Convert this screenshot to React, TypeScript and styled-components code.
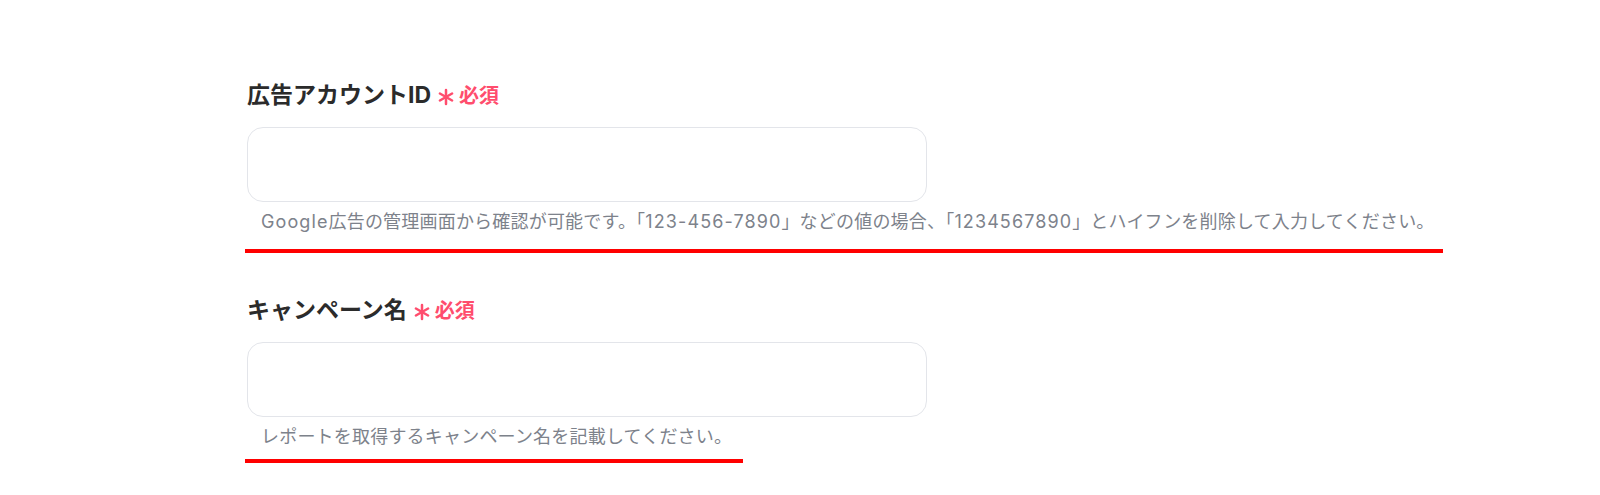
import React from 'react'
import styled, { createGlobalStyle } from 'styled-components'

const GlobalStyle = createGlobalStyle`
    html, body {
        margin: 0;
        padding: 0;
        background: #ffffff;
    }
    body {
        font-family: Inter, "Noto Sans CJK JP", sans-serif;
    }
`

type Field = {
    label: string
    help: string
    lineWidth: number
    lineGap: number
}

const fields: Field[] = [
    {
        label: '広告アカウントID',
        help: 'Google広告の管理画面から確認が可能です。「123-456-7890」などの値の場合、「1234567890」とハイフンを削除して入力してください。',
        lineWidth: 1198,
        lineGap: 15,
    },
    {
        label: 'キャンペーン名',
        help: 'レポートを取得するキャンペーン名を記載してください。',
        lineWidth: 498,
        lineGap: 10,
    },
]

// latin runs get a bit more tracking than the japanese text
const splitRuns = (text: string) => text.split(/([A-Za-z0-9-]+)/).filter(Boolean)

const Asterisk = () => (
    <svg width="18" height="18" viewBox="0 0 18 18">
        <g stroke="#ff4d6d" strokeWidth="2.5" strokeLinecap="round">
            <line x1="9" y1="2" x2="9" y2="16" />
            <line x1="2.9" y1="5.5" x2="15.1" y2="12.5" />
            <line x1="2.9" y1="12.5" x2="15.1" y2="5.5" />
        </g>
    </svg>
)

const App = () => {
    return (
        <Page>
            <GlobalStyle />
            <Form>
                {fields.map((f) => (
                    <Section key={f.label}>
                        <Label>
                            <LabelText>{f.label}</LabelText>
                            <Required>
                                <Asterisk />
                                <RequiredText>必須</RequiredText>
                            </Required>
                        </Label>
                        <Input type="text" />
                        <Help>
                            {splitRuns(f.help).map((run, i) =>
                                /^[A-Za-z0-9-]+$/.test(run) ? <Latin key={i}>{run}</Latin> : run
                            )}
                        </Help>
                        <Underline $width={f.lineWidth} $gap={f.lineGap} />
                    </Section>
                ))}
            </Form>
        </Page>
    )
}

export default App

const Page = styled.div`
    width: 1600px;
    height: 495px;
    box-sizing: border-box;
    padding: 80px 0 0 247px;
    background: #fff;
`
const Form = styled.div`
    display: flex;
    flex-direction: column;
    gap: 42px;
`
const Section = styled.div`
    display: flex;
    flex-direction: column;
    align-items: flex-start;
`
const Label = styled.div`
    display: flex;
    align-items: center;
    height: 30px;
    margin-bottom: 17px;
`
const LabelText = styled.span`
    font-size: 23px;
    font-weight: 700;
    line-height: 30px;
    color: #2b2b2b;
`
const Required = styled.span`
    display: flex;
    align-items: center;
    gap: 4px;
    margin-left: 6px;
    padding-top: 3px;
`
const RequiredText = styled.span`
    font-family: "Noto Sans CJK JP", sans-serif;
    font-size: 20px;
    font-weight: 700;
    line-height: 30px;
    color: #ff4d6d;
    margin-top: -3px;
`
const Input = styled.input`
    width: 680px;
    height: 75px;
    box-sizing: border-box;
    border: 1.5px solid #e3e5ea;
    border-radius: 16px;
    background: #fff;
    outline: none;
    padding: 0 16px;
    font: inherit;
`
const Help = styled.p`
    margin: 8px 0 0 14px;
    font-size: 18px;
    line-height: 24px;
    letter-spacing: 0.2px;
    color: #7d828b;
    white-space: nowrap;
`
const Latin = styled.span`
    letter-spacing: 1.1px;
`
const Underline = styled.div<{ $width: number; $gap: number }>`
    width: ${(p) => p.$width}px;
    height: 4px;
    margin: ${(p) => p.$gap}px 0 0 -2px;
    background: #ff0000;
`
